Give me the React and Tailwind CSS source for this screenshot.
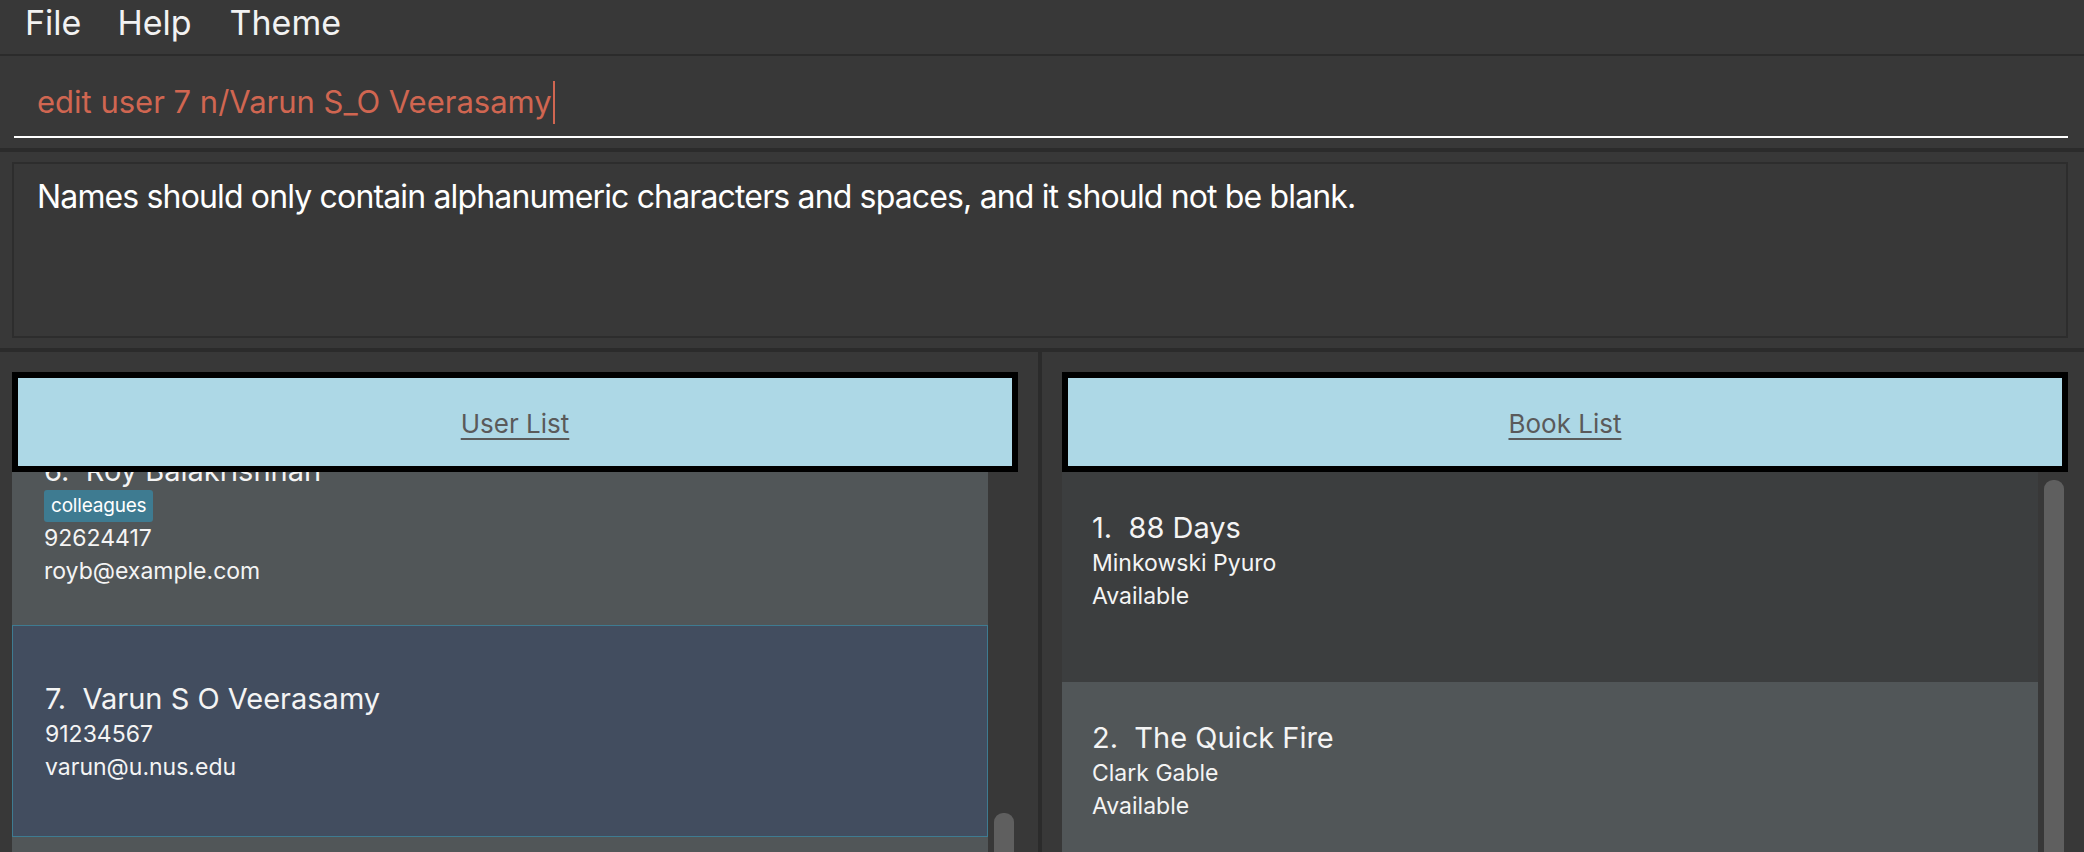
const users = [
  {
    id: 6,
    name: "Roy Balakrishnan",
    tags: ["colleagues"],
    phone: "92624417",
    email: "royb@example.com",
  },
  {
    id: 7,
    name: "Varun S O Veerasamy",
    tags: [],
    phone: "91234567",
    email: "varun@u.nus.edu",
    selected: true,
  },
  { id: 8, name: "", tags: [], phone: "", email: "" },
];

const books = [
  { id: 1, title: "88 Days", author: "Minkowski Pyuro", status: "Available" },
  { id: 2, title: "The Quick Fire", author: "Clark Gable", status: "Available" },
];

const PanelHeader = ({ title }) => (
  <div className="flex h-[100px] shrink-0 items-center justify-center border-[6px] border-black bg-[#add8e6] pt-[4px]">
    <span className="text-[26px] leading-[34px] text-[#5a5a5a] underline decoration-[2px] underline-offset-[5px]">
      {title}
    </span>
  </div>
);

const UserCard = ({ user, index }) => {
  let cls = "h-[212px] shrink-0 pl-[32px] ";
  if (user.selected) {
    cls += "border border-[#3e7b91] bg-[#424d5f] pt-[54px] pl-[31px]";
  } else {
    cls += "bg-[#515658] pt-[39px]";
  }
  if (index === 0) cls += " -mt-[59px]";
  return (
    <div className={cls}>
      {user.name && (
        <div className="whitespace-pre text-[29px] leading-[38px]">
          {user.id}.  {user.name}
        </div>
      )}
      {user.tags.length > 0 && (
        <div className="flex gap-[6px]">
          {user.tags.map((t) => (
            <span
              key={t}
              className="flex h-[32px] items-center rounded-[3px] bg-[#3e7b91] px-[7px] text-[19px] tracking-[-0.2px] text-white"
            >
              {t}
            </span>
          ))}
        </div>
      )}
      {user.phone && <div className="text-[23px] leading-[33px]">{user.phone}</div>}
      {user.email && <div className="text-[23px] leading-[33px]">{user.email}</div>}
    </div>
  );
};

const BookCard = ({ book, index }) => (
  <div
    className={
      "h-[210px] shrink-0 pl-[30px] pt-[37px] " +
      (index % 2 === 0 ? "bg-[#3c3e3f]" : "bg-[#515658]")
    }
  >
    <div className="whitespace-pre text-[29px] leading-[38px]">
      {book.id}.  {book.title}
    </div>
    <div className="text-[23px] leading-[33px]">{book.author}</div>
    <div className="text-[23px] leading-[33px]">{book.status}</div>
  </div>
);

export default function App() {
  return (
    <div className="flex h-[852px] w-[2084px] flex-col overflow-hidden bg-[#383838] font-['Inter',sans-serif] text-[#f4f4f4]">
      {/* menu */}
      <div className="flex h-[54px] shrink-0 items-start pl-[25px] pt-[3px] text-[34px] leading-[40px] text-[#f2f2f2]">
        <span>File</span>
        <span className="ml-[36px]">Help</span>
        <span className="ml-[38px]">Theme</span>
      </div>
      <div className="h-[2px] shrink-0 bg-[#2b2b2b]" />

      {/* command box */}
      <div className="h-[92px] shrink-0 pl-[14px] pr-[16px] pt-[26px]">
        <div className="flex h-[40px] items-center pl-[23px] text-[31px] leading-[40px] text-[#d06651]">
          <span>edit user 7 n/Varun S_O Veerasamy</span>
          <span className="ml-[1px] h-[43px] w-[2px] bg-[#d06651]" />
        </div>
        <div className="mt-[14px] h-[2px] bg-white" />
      </div>
      <div className="h-[4px] shrink-0 bg-[#2b2b2b]" />

      {/* result display */}
      <div className="h-[196px] shrink-0 pl-[12px] pr-[16px] pt-[10px]">
        <div className="h-[176px] border-2 border-[#2d2d2d] pl-[23px] pt-[13px] text-[32px] leading-[40px] tracking-[-0.85px] text-white">
          Names should only contain alphanumeric characters and spaces, and it should not be blank.
        </div>
      </div>
      <div className="h-[4px] shrink-0 bg-[#2b2b2b]" />

      {/* lists */}
      <div className="flex min-h-0 flex-1">
        <div className="flex w-[1038px] shrink-0 flex-col pl-[12px] pr-[20px] pt-[20px]">
          <PanelHeader title="User List" />
          <div className="flex min-h-0 flex-1 overflow-hidden">
            <div className="flex w-[976px] flex-col">
              {users.map((u, i) => (
                <UserCard key={u.id} user={u} index={i} />
              ))}
            </div>
            <div className="w-[30px] pl-[6px]">
              <div className="mt-[341px] h-[100px] w-[20px] rounded-t-[9px] bg-[#5f5f5f]" />
            </div>
          </div>
        </div>

        <div className="w-[4px] shrink-0 bg-[#2b2b2b]" />

        <div className="flex flex-1 flex-col pl-[20px] pr-[16px] pt-[20px]">
          <PanelHeader title="Book List" />
          <div className="flex min-h-0 flex-1 overflow-hidden">
            <div className="flex w-[976px] flex-col">
              {books.map((b, i) => (
                <BookCard key={b.id} book={b} index={i} />
              ))}
            </div>
            <div className="w-[30px] pl-[6px]">
              <div className="mt-[8px] h-[500px] w-[20px] rounded-t-[9px] bg-[#5f5f5f]" />
            </div>
          </div>
        </div>
      </div>
    </div>
  );
}
